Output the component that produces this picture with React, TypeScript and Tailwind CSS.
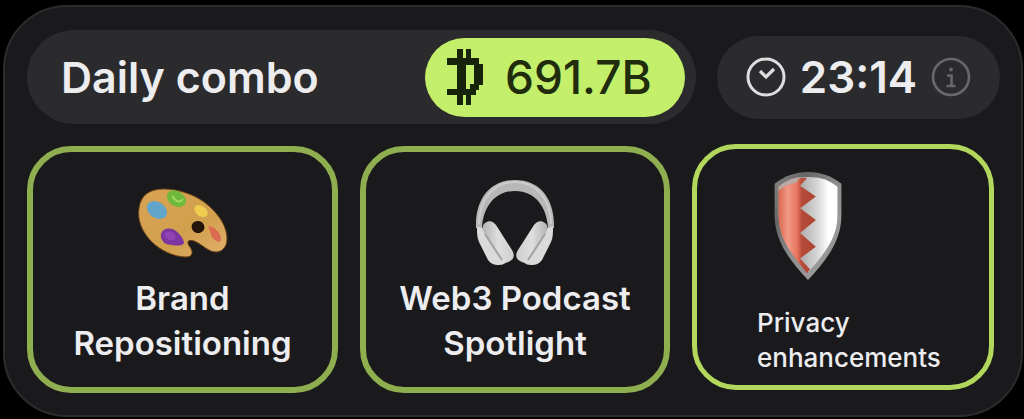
import React from 'react'

const CoinIcon = () => (
  <svg className="h-[56px] w-9 shrink-0" viewBox="0 0 36 56" fill="#18240a" aria-hidden="true">
    <path d="M10 0h6v9h3V0h5v9h8v6h4v21h-4v5h-3v5h-5v10h-5V46h-3v10h-6V46H0v-6h10V16H0V9h10zM19 16v24h4v-5h4V16z" fillRule="evenodd" />
  </svg>
)

const ClockIcon = () => (
  <svg className="h-10 w-10 shrink-0" viewBox="0 0 40 40" fill="none" stroke="#dedee0" strokeWidth="3" aria-hidden="true">
    <circle cx="20" cy="20" r="18" />
    <path d="M14 14l6 6 8-8" strokeWidth="3.2" />
  </svg>
)

const InfoIcon = () => (
  <svg className="h-10 w-10" viewBox="0 0 40 40" fill="none" stroke="#68686b" strokeWidth="2.6" aria-hidden="true">
    <circle cx="20" cy="20" r="18" />
    <path d="M16 18.500h4.500V29M15.500 29h9" />
    <circle cx="20" cy="12.500" r="1.900" fill="#68686b" stroke="none" />
  </svg>
)

const PaletteIcon = () => (
  <svg className="h-[72px] w-[92px]" viewBox="0 0 92 72" aria-hidden="true">
    <defs>
      <linearGradient id="wood" x1="0" y1="0" x2="1" y2="1">
        <stop offset="0" stopColor="#d9a355" />
        <stop offset="0.6" stopColor="#d0a04c" />
        <stop offset="1" stopColor="#e3b070" />
      </linearGradient>
    </defs>
    <path d="M2 22C4 8 14 3 27 3c15 0 33 6 45 17 11 10 18 21 18 33 0 8-5 13-11 13-8 0-14-8-22-11-6-2-8 1-4 6 4 6 2 10-4 10-11 0-26-6-36-17C5 45 0 34 2 22z" fill="url(#wood)" stroke="#6b4117" strokeWidth="1" />
    <ellipse cx="61" cy="41" rx="6.500" ry="6" fill="#24150a" transform="rotate(20 61 41)" />
    <path d="M30 10c1-7 10-8 17 0 4 5 2 11-6 11-6-1-11-5-11-11z" fill="#6eb83b" />
    <path d="M35 10c4 6 8 7 11 3" fill="none" stroke="#a0da62" strokeWidth="2" />
    <ellipse cx="20" cy="24" rx="11" ry="8" fill="#62a5ca" transform="rotate(35 20 24)" />
    <ellipse cx="64" cy="25" rx="7.500" ry="5" fill="#f0cd4f" transform="rotate(38 64 25)" />
    <path d="M24 51c-1-8 8-11 15-6 4 3 7 7 8 11 0 4-6 4-12 3-6 0-10-3-11-8z" fill="#7d35a0" />
    <ellipse cx="33" cy="50" rx="6" ry="4" fill="#9242b5" transform="rotate(25 33 50)" />
    <path d="M71 40c6 0 13 7 13 13 0 4-4 3-7 0-4-3-3-8-6-13z" fill="#dc6a50" />
  </svg>
)

const HeadphonesIcon = () => (
  <svg className="h-[88px] w-20" viewBox="0 0 80 88" aria-hidden="true">
    <defs>
      <linearGradient id="cup" x1="0" y1="0" x2="1" y2="0">
        <stop offset="0" stopColor="#b4b4b4" />
        <stop offset="0.5" stopColor="#dedede" />
        <stop offset="1" stopColor="#cfcfcf" />
      </linearGradient>
    </defs>
    <path d="M1 50C0 21 15 2 40 2s40 19 39 48h-6C72 30 61 13 40 13S8 30 7 50z" fill="#b8b8b8" />
    <path d="M4 46C4 21 19 4 40 4s36 17 36 42" fill="none" stroke="#cdcdcd" strokeWidth="2" />
    <g id="left-cup">
      <path d="M2 49c5 0 8 2 11 6l17 24c3 5 0 8-6 8-5 0-8-1-11-5L4 64c-2-4-2-9-2-15z" fill="#dadada" />
      <path d="M10 45c4-3 8-2 11 2l16 25c3 5 2 9-2 11-4 3-8 2-10-1L9 55c-2-4-2-8 1-10z" fill="url(#cup)" />
      <path d="M10 56l17 26" stroke="#a2a2a2" strokeWidth="2" />
    </g>
    <use href="#left-cup" transform="matrix(-1 0 0 1 80 0)" />
  </svg>
)

const ShieldIcon = () => (
  <svg className="h-[110px] w-[70px]" viewBox="0 0 70 112" aria-hidden="true">
    <defs>
      <linearGradient id="rim" x1="0" y1="0" x2="1" y2="1">
        <stop offset="0" stopColor="#858585" />
        <stop offset="0.25" stopColor="#666" />
        <stop offset="0.5" stopColor="#8c8c8c" />
        <stop offset="0.75" stopColor="#999" />
        <stop offset="1" stopColor="#555" />
      </linearGradient>
      <linearGradient id="silver" x1="0" y1="0" x2="1" y2="0">
        <stop offset="0.35" stopColor="#a9a9a9" />
        <stop offset="0.65" stopColor="#d5d5d5" />
        <stop offset="0.85" stopColor="#fff" />
      </linearGradient>
      <linearGradient id="red" gradientUnits="userSpaceOnUse" x1="5" y1="0" x2="43" y2="0">
        <stop offset="0" stopColor="#d9674f" />
        <stop offset="0.25" stopColor="#f19a86" />
        <stop offset="0.5" stopColor="#e87660" />
        <stop offset="0.62" stopColor="#b54b38" />
        <stop offset="1" stopColor="#ad4431" />
      </linearGradient>
    </defs>
    <path d="M1 13C11 5 22 1 35 1s24 4 34 12v32c0 25-14 45-34 66C15 90 1 70 1 45z" fill="url(#rim)" />
    <path d="M5 16C13 9 23 6 35 6s22 3 30 10v29c0 22-12 38-30 58C17 83 5 67 5 45z" fill="url(#silver)" />
    <path d="M5 16C13 9 22 7 34 7l-7 8 16 11-16 12 16 12-16 13 16 14-16 12 10 11-3 4C16 82 5 67 5 45z" fill="url(#red)" />
    <path d="M5 16C13 9 20 7 27 6l-4 6C16 13 10 16 5 20z" fill="#b8a9a4" />
  </svg>
)

const cards = [
  { title: 'Brand Repositioning', icon: <PaletteIcon /> },
  { title: 'Web3 Podcast Spotlight', icon: <HeadphonesIcon /> },
]

const App = () => {
  return (
    <main className="bg-black pt-[5px] pr-px pb-0.5 pl-[3px] font-['Inter',sans-serif] text-[#ededef]">
      <section className="rounded-[64px] border-2 border-[#2c2c2f] bg-[#1a1a1d] pt-[23px] pr-[21px] pb-[22px] pl-[22px]">
        <div className="flex items-center gap-[21px]">
          <div className="flex h-[94px] flex-1 items-center justify-between rounded-full bg-[#2b2b2d] pr-[11px] pl-[34px]">
            <h1 className="text-[43px] font-semibold whitespace-nowrap">Daily combo</h1>
            <div className="flex h-[79px] w-[260px] items-center gap-[22px] rounded-full bg-[#c3ef6b] pl-[22px] text-[#202c0c]">
              <CoinIcon />
              <span className="text-[46px] font-medium">691.7B</span>
            </div>
          </div>
          <div className="flex h-[83px] w-[283px] items-center justify-center gap-3.5 rounded-full bg-[#2b2b2d]">
            <ClockIcon />
            <time className="text-[44px] font-semibold">23:14</time>
            <button type="button" aria-label="About the daily combo">
              <InfoIcon />
            </button>
          </div>
        </div>

        <div className="mt-[22px] grid grid-cols-[311fr_310fr_302fr] gap-[22px] pr-1.5">
          {cards.map((card) => (
            <article key={card.title} className="flex h-[247px] flex-col items-center rounded-[44px] border-6 border-[#8fae4f] px-6 pt-6">
              <div className="flex h-[92px] items-center">{card.icon}</div>
              <h2 className="mt-2 text-center text-[33px] leading-[45px] font-semibold">{card.title}</h2>
            </article>
          ))}
          <article className="-mt-0.5 flex h-[246px] flex-col rounded-[44px] border-5 border-[#b3d75c] pt-[22px] pl-[60px]">
            <div className="ml-4">
              <ShieldIcon />
            </div>
            <h2 className="mt-6 text-[26px] leading-[35px] font-medium">
              Privacy
              <br />
              enhancements
            </h2>
          </article>
        </div>
      </section>
    </main>
  )
}

export default App
